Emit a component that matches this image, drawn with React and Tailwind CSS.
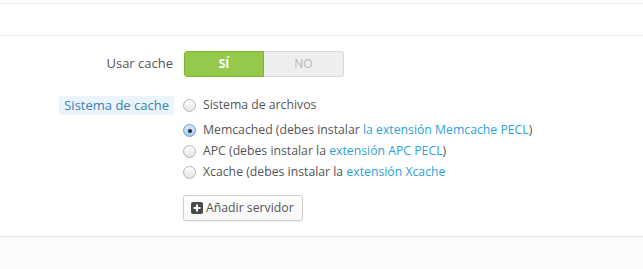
import React from "react";

function Radio({ checked }) {
  return (
    <span
      className={
        "relative inline-flex h-[13px] w-[13px] shrink-0 items-center justify-center rounded-full border " +
        (checked
          ? "border-[#6f9fd3] bg-gradient-to-b from-[#d6e8fa] to-[#a9cbef]"
          : "border-[#b5b5b5] bg-gradient-to-b from-[#ffffff] to-[#e4e4e4]")
      }
    >
      {checked && <span className="h-[4px] w-[4px] rounded-full bg-[#1f2d3d]" />}
    </span>
  );
}

function Option({ checked, pre, link, post, className }) {
  return (
    <div className={"flex h-[21px] items-center gap-[7px] " + (className || "")}>
      <Radio checked={checked} />
      <span className="text-[12.25px] text-[#555]">
        {pre}
        {link && <span className="text-[#2ea1db]">{link}</span>}
        {post}
      </span>
    </div>
  );
}

export default function App() {
  return (
    <div
      className="w-[643px] h-[269px] overflow-hidden bg-white"
      style={{ fontFamily: '"Open Sans", "Liberation Sans", sans-serif' }}
    >
      <div className="h-[3px]" />
      <div className="h-[33px] border-y border-[#e6e6e6]" />
      <div className="pt-[15px]">
        <div className="flex items-center">
          <div className="w-[174px] text-right text-[13px] text-[#555] pr-[1px]">Usar cache</div>
          <div className="ml-[10px] flex h-[26px] w-[160px]">
            <div className="flex w-[80px] items-center justify-center rounded-l-[3px] border border-[#7fb536] bg-[#95c94b] text-[12px] font-bold text-white">
              SÍ
            </div>
            <div className="flex w-[80px] items-center justify-center rounded-r-[3px] border border-l-0 border-[#d9d9d9] bg-[#eeeeee] text-[12px] text-[#b8b8b8]">
              NO
            </div>
          </div>
        </div>
        <div className="mt-[18px] flex">
          <div className="flex w-[174px] justify-end pt-[1px]">
            <span className="h-[19px] rounded-[2px] bg-[#ebf4fb] px-[5px] text-[13px] leading-[19px] text-[#3a80b5]">
              Sistema de cache
            </span>
          </div>
          <div className="ml-[9px] flex flex-col">
            <Option pre="Sistema de archivos" className="mb-[4px]" />
            <Option
              checked
              pre="Memcached (debes instalar "
              link="la extensión Memcache PECL"
              post=")"
            />
            <Option pre="APC (debes instalar la " link="extensión APC PECL" post=")" />
            <Option pre="Xcache (debes instalar la " link="extensión Xcache" />
            <div className="mt-[12px]">
              <button className="flex h-[26px] items-center gap-[3px] rounded-[3px] border border-[#cfcfcf] bg-gradient-to-b from-white to-[#f7f7f7] pl-[7px] pr-[8px] text-[12.25px] text-[#555] shadow-[0_1px_1px_rgba(0,0,0,0.06)]">
                <svg width="12" height="12" viewBox="0 0 12 12">
                  <rect x="0" y="0" width="12" height="12" rx="2" fill="#4a4a4a" />
                  <rect x="5" y="2.5" width="2" height="7" fill="#fff" />
                  <rect x="2.5" y="5" width="7" height="2" fill="#fff" />
                </svg>
                Añadir servidor
              </button>
            </div>
          </div>
        </div>
      </div>
      <div className="mt-[15px] h-[40px] border-t border-[#e6e6e6] bg-[#fafbfc]" />
    </div>
  );
}
